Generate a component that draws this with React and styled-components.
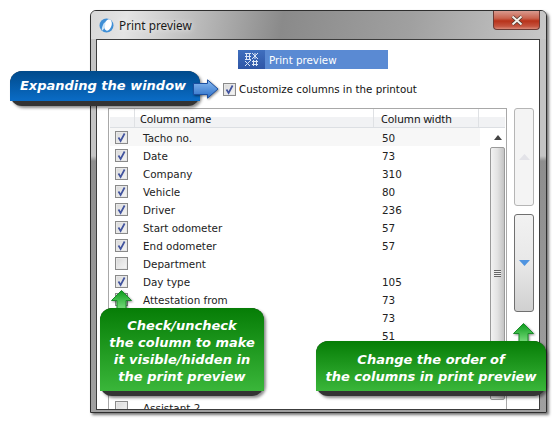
import React from 'react';
import styled, { createGlobalStyle } from 'styled-components';

const GlobalStyle = createGlobalStyle`
  html, body { margin: 0; padding: 0; background: #fff; overflow: hidden; }
  body { font-family: "DejaVu Sans", sans-serif; }
`;

const columns = [
  { name: 'Tacho no.', width: '50', checked: true },
  { name: 'Date', width: '73', checked: true },
  { name: 'Company', width: '310', checked: true },
  { name: 'Vehicle', width: '80', checked: true },
  { name: 'Driver', width: '236', checked: true },
  { name: 'Start odometer', width: '57', checked: true },
  { name: 'End odometer', width: '57', checked: true },
  { name: 'Department', width: '', checked: false },
  { name: 'Day type', width: '105', checked: true },
  { name: 'Attestation from', width: '73', checked: false },
  { name: '', width: '73', checked: false },
  { name: '', width: '51', checked: false },
  { name: '', width: '', checked: false },
  { name: '', width: '', checked: false },
  { name: '', width: '', checked: false },
  { name: 'Assistant 2', width: '', checked: false },
];

const Page = styled.div`
  position: relative;
  width: 557px;
  height: 423px;
  padding: 10px 0 0 90px;
  box-sizing: border-box;
  overflow: hidden;
`;

const Window = styled.div`
  width: 457px;
  height: 403px;
  box-sizing: border-box;
  display: flex;
  flex-direction: column;
  border: 1px solid #2e2e2e;
  border-radius: 6px 6px 0 0;
  background: linear-gradient(180deg, #c4c4c4 0, #c4c4c4 145px, #8e8e8e 150px, #a0a0a0 100%);
  box-shadow: 2px 2px 3px rgba(0, 0, 0, 0.55);
`;

const TitleBar = styled.div`
  height: 28px;
  flex: none;
  display: flex;
  align-items: center;
  padding-left: 8px;
  gap: 5px;
  border-radius: 5px 5px 0 0;
  background: linear-gradient(100deg, #d8d8d8 0, #e4e4e4 8%, #8a8a8a 42%, #a0a0a0 70%, #c8c8c8 100%);
`;

const TitleText = styled.span`
  font-family: "Noto Sans", sans-serif;
  font-size: 11.8px;
  color: #1a1a1a;
  text-shadow: 0 0 6px #fff;
  flex: 1;
`;

const CloseButton = styled.div`
  width: 47px;
  height: 19px;
  margin: -9px 6px 0 0;
  display: flex;
  align-items: center;
  justify-content: center;
  box-sizing: border-box;
  border: 1px solid #6b3a34;
  border-top: 0;
  border-radius: 0 0 4px 4px;
  background: linear-gradient(180deg, #d99a8e 0, #c9644f 40%, #b8321a 55%, #c5543f 85%, #d98a78 100%);
`;

const Client = styled.div`
  flex: 1;
  min-height: 0;
  margin: 0 6px 2px 5px;
  border: 1px solid #3c3c3c;
  background: #fff;
  padding: 10px 0 0 11px;
  overflow: hidden;
`;

const Banner = styled.div`
  width: 150px;
  height: 19px;
  margin-left: 130px;
  display: flex;
  align-items: center;
  background: #5a8ad3;
  color: #fff;
  font-size: 10.3px;
`;

const BannerIcon = styled.div`
  width: 27px;
  height: 19px;
  margin-right: 4px;
  display: flex;
  align-items: center;
  justify-content: center;
  background: linear-gradient(180deg, #3f6fbe, #2f56a6);
`;

const CustomizeRow = styled.div`
  display: flex;
  align-items: center;
  height: 18px;
  margin: 11px 0 10px 115px;
  gap: 3px;
  font-size: 10.3px;
  color: #111;
`;

const Box = styled.span`
  width: 13px;
  height: 13px;
  flex: none;
  box-sizing: border-box;
  display: flex;
  align-items: center;
  justify-content: center;
  border: 1px solid #8a8a8a;
  box-shadow: inset 0 0 0 1px #e8e8e8;
  background: linear-gradient(135deg, #d8d8d8, #f6f6f6);
`;

const Main = styled.div`
  display: flex;
  gap: 7px;
`;

const Table = styled.div`
  width: 399px;
  height: 320px;
  box-sizing: border-box;
  border: 1px solid #a8a8a8;
  padding: 0 1px;
  flex: none;
`;

const HeaderRow = styled.div`
  display: flex;
  height: 19px;
  box-sizing: border-box;
  border-bottom: 1px solid #dcdfe3;
  background: linear-gradient(180deg, #fff 0, #fff 45%, #f1f2f4 46%, #f1f2f4 100%);
  font-family: "Noto Sans", sans-serif;
  font-size: 10.8px;
  color: #111;
`;

const HeaderCell = styled.div`
  width: ${p => p.$w}px;
  box-sizing: border-box;
  padding-left: ${p => p.$pad}px;
  line-height: 19px;
  border-right: 1px solid #dfe1e4;
  white-space: nowrap;
`;

const TableBody = styled.div`
  display: flex;
`;

const Rows = styled.div`
  width: 370px;
  flex: none;
`;

const Row = styled.div`
  display: flex;
  align-items: center;
  height: 18px;
  background: ${p => (p.$alt ? '#f7f7f7' : '#fff')};
  font-size: 10.4px;
  color: #222;
`;

const CheckCell = styled.div`
  width: 24px;
  padding-left: 5px;
  box-sizing: border-box;
  display: flex;
`;

const NameCell = styled.div`
  width: 240px;
  padding: 1px 0 0 9px;
  box-sizing: border-box;
  white-space: nowrap;
`;

const WidthCell = styled.div`
  padding: 1px 0 0 8px;
`;

const ScrollBar = styled.div`
  width: 15px;
  margin-left: 10px;
  flex: none;
  display: flex;
  flex-direction: column;
`;

const ScrollArrow = styled.div`
  height: 19px;
  display: flex;
  align-items: center;
  justify-content: center;
`;

const ScrollThumb = styled.div`
  height: 253px;
  box-sizing: border-box;
  display: flex;
  align-items: center;
  justify-content: center;
  border: 1px solid #9a9a9a;
  border-radius: 2px;
  background: linear-gradient(90deg, #f2f2f2, #e2e2e2 50%, #c4c4c4);
`;

const Grip = styled.div`
  width: 7px;
  height: 7px;
  background: repeating-linear-gradient(180deg, #666 0, #666 1px, #eee 1px, #eee 2px);
`;

const OrderButtons = styled.div`
  width: 20px;
  display: flex;
  flex-direction: column;
  gap: 8px;
`;

const OrderButton = styled.div`
  height: 98px;
  box-sizing: border-box;
  display: flex;
  align-items: center;
  justify-content: center;
  border: 1px solid ${p => (p.$active ? '#707070' : '#b5b5b5')};
  border-radius: 3px;
  background: ${p => (p.$active
    ? 'linear-gradient(180deg, #f2f2f2, #e8e8e8 50%, #d0d0d0)'
    : '#f4f4f4')};
`;

const Callout = styled.div`
  position: absolute;
  left: ${p => p.$left}px;
  top: ${p => p.$top}px;
  width: ${p => p.$w}px;
  box-sizing: border-box;
  padding-bottom: 5px;
  border-radius: 12px;
  background: #333;
  box-shadow: 2px 2px 3px rgba(0, 0, 0, 0.45);
`;

const CalloutBody = styled.div`
  border-radius: 12px 12px 0 0;
  height: ${p => p.$h}px;
  box-sizing: border-box;
  padding: ${p => p.$pad || '0'};
  display: flex;
  flex-direction: column;
  justify-content: center;
  background: ${p => (p.$blue
    ? 'linear-gradient(180deg, #004a8b, #0a6cc6)'
    : 'linear-gradient(180deg, #067d06, #3ab63a)')};
  color: #fff;
  font-weight: bold;
  font-style: italic;
  font-size: 13px;
  line-height: 17px;
  text-align: center;
  white-space: nowrap;
`;

const ArrowMark = styled.svg`
  position: absolute;
  left: ${p => p.$left}px;
  top: ${p => p.$top}px;
  filter: drop-shadow(1px 1px 1px rgba(0, 0, 0, 0.45));
`;

const Check = () => (
  <svg width="11" height="11" viewBox="0 0 11 11">
    <path d="M2.5 5.5 L4.6 9 L8.6 1.5" fill="none" stroke="#41539e" strokeWidth="1.7" />
  </svg>
);

const GreenArrow = ({ left, top }) => (
  <ArrowMark $left={left} $top={top} width="21" height="25" viewBox="0 0 21 25">
    <defs>
      <linearGradient id="greenUp" x1="0" y1="0" x2="0" y2="1">
        <stop offset="0" stopColor="#0a9a1a" />
        <stop offset="1" stopColor="#9af09a" />
      </linearGradient>
    </defs>
    <path d="M10.5 0.5 L20.5 10.5 L15 10.5 L15 24.5 L6 24.5 L6 10.5 L0.5 10.5 Z" fill="url(#greenUp)" stroke="#1a8a2a" />
  </ArrowMark>
);

const BlueArrow = () => (
  <ArrowMark $left={193} $top={79} width="26" height="20" viewBox="0 0 26 20">
    <defs>
      <linearGradient id="blueRight" x1="0" y1="0" x2="0" y2="1">
        <stop offset="0" stopColor="#8cbcf0" />
        <stop offset="1" stopColor="#2a6ec8" />
      </linearGradient>
    </defs>
    <path d="M0.5 4.5 L14.5 4.5 L14.5 0.8 L25 10 L14.5 19.2 L14.5 15.5 L0.5 15.5 Z" fill="url(#blueRight)" stroke="#1c4fa0" />
  </ArrowMark>
);

const AppLogo = () => (
  <svg width="15" height="15" viewBox="0 0 15 15">
    <circle cx="7.5" cy="7.5" r="7" fill="#3f8fd6" />
    <ellipse cx="9" cy="7" rx="3.6" ry="5.8" fill="#fff" transform="rotate(18 9 7)" />
    <ellipse cx="4.6" cy="8.5" rx="1.2" ry="4.2" fill="#cfe6f8" transform="rotate(18 4.6 8.5)" />
  </svg>
);

const GridIcon = () => (
  <svg width="15" height="15" viewBox="0 0 15 15" fill="none" stroke="#dce6f6" strokeWidth="1">
    <path d="M1 1.5H7M1 4.5H7M1 7.5H7M2.5 1V8M5.5 1V8" />
    <path d="M8 1L14 7M14 1L8 7M11 1V7" />
    <path d="M1 14L7 8M1 9L6 14" />
    <path d="M8 9.5H14M8 12.5H14M9.5 8V14M12.5 8V14" />
  </svg>
);

export default function App() {
  return (
    <Page>
      <GlobalStyle />
      <Window>
        <TitleBar>
          <AppLogo />
          <TitleText>Print preview</TitleText>
          <CloseButton>
            <svg width="16" height="11" viewBox="0 0 16 11">
              <path d="M3.5 1.5L12.5 9.5M12.5 1.5L3.5 9.5" stroke="#50392f" strokeWidth="3.6" />
              <path d="M3.5 1.5L12.5 9.5M12.5 1.5L3.5 9.5" stroke="#f4f0ea" strokeWidth="2" />
            </svg>
          </CloseButton>
        </TitleBar>
        <Client>
          <Banner>
            <BannerIcon><GridIcon /></BannerIcon>
            Print preview
          </Banner>
          <CustomizeRow>
            <Box><Check /></Box>
            Customize columns in the printout
          </CustomizeRow>
          <Main>
            <Table>
              <HeaderRow>
                <HeaderCell $w={25} $pad={0} />
                <HeaderCell $w={239} $pad={5}>Column name</HeaderCell>
                <HeaderCell $w={105} $pad={7}>Column width</HeaderCell>
              </HeaderRow>
              <TableBody>
                <Rows>
                  {columns.map((c, i) => (
                    <Row key={i} $alt={i === 0}>
                      <CheckCell><Box>{c.checked && <Check />}</Box></CheckCell>
                      <NameCell>{c.name}</NameCell>
                      <WidthCell>{c.width}</WidthCell>
                    </Row>
                  ))}
                </Rows>
                <ScrollBar>
                  <ScrollArrow>
                    <svg width="8" height="5" viewBox="0 0 8 5"><path d="M4 0L8 5H0Z" fill="#444" /></svg>
                  </ScrollArrow>
                  <ScrollThumb><Grip /></ScrollThumb>
                </ScrollBar>
              </TableBody>
            </Table>
            <OrderButtons>
              <OrderButton>
                <svg width="11" height="6" viewBox="0 0 11 6"><path d="M5.5 0L11 6H0Z" fill="#e3e3e8" /></svg>
              </OrderButton>
              <OrderButton $active>
                <svg width="11" height="6" viewBox="0 0 11 6"><path d="M0 0H11L5.5 6Z" fill="#4f94e0" /></svg>
              </OrderButton>
            </OrderButtons>
          </Main>
        </Client>
      </Window>

      <Callout $left={10} $top={71} $w={190}>
        <CalloutBody $blue $h={30} $pad="0 4px 2px 0">Expanding the window</CalloutBody>
      </Callout>
      <BlueArrow />

      <GreenArrow left={111} top={290} />
      <Callout $left={100} $top={308} $w={164}>
        <CalloutBody $h={83} $pad="2px 0 0 0">
          <div>Check/uncheck</div>
          <div>the column to make</div>
          <div>it visible/hidden in</div>
          <div>the print preview</div>
        </CalloutBody>
      </Callout>

      <GreenArrow left={513} top={323} />
      <Callout $left={316} $top={341} $w={230}>
        <CalloutBody $h={50} $pad="3px 0 0 0">
          <div>Change the order of</div>
          <div>the columns in print preview</div>
        </CalloutBody>
      </Callout>
    </Page>
  );
}
